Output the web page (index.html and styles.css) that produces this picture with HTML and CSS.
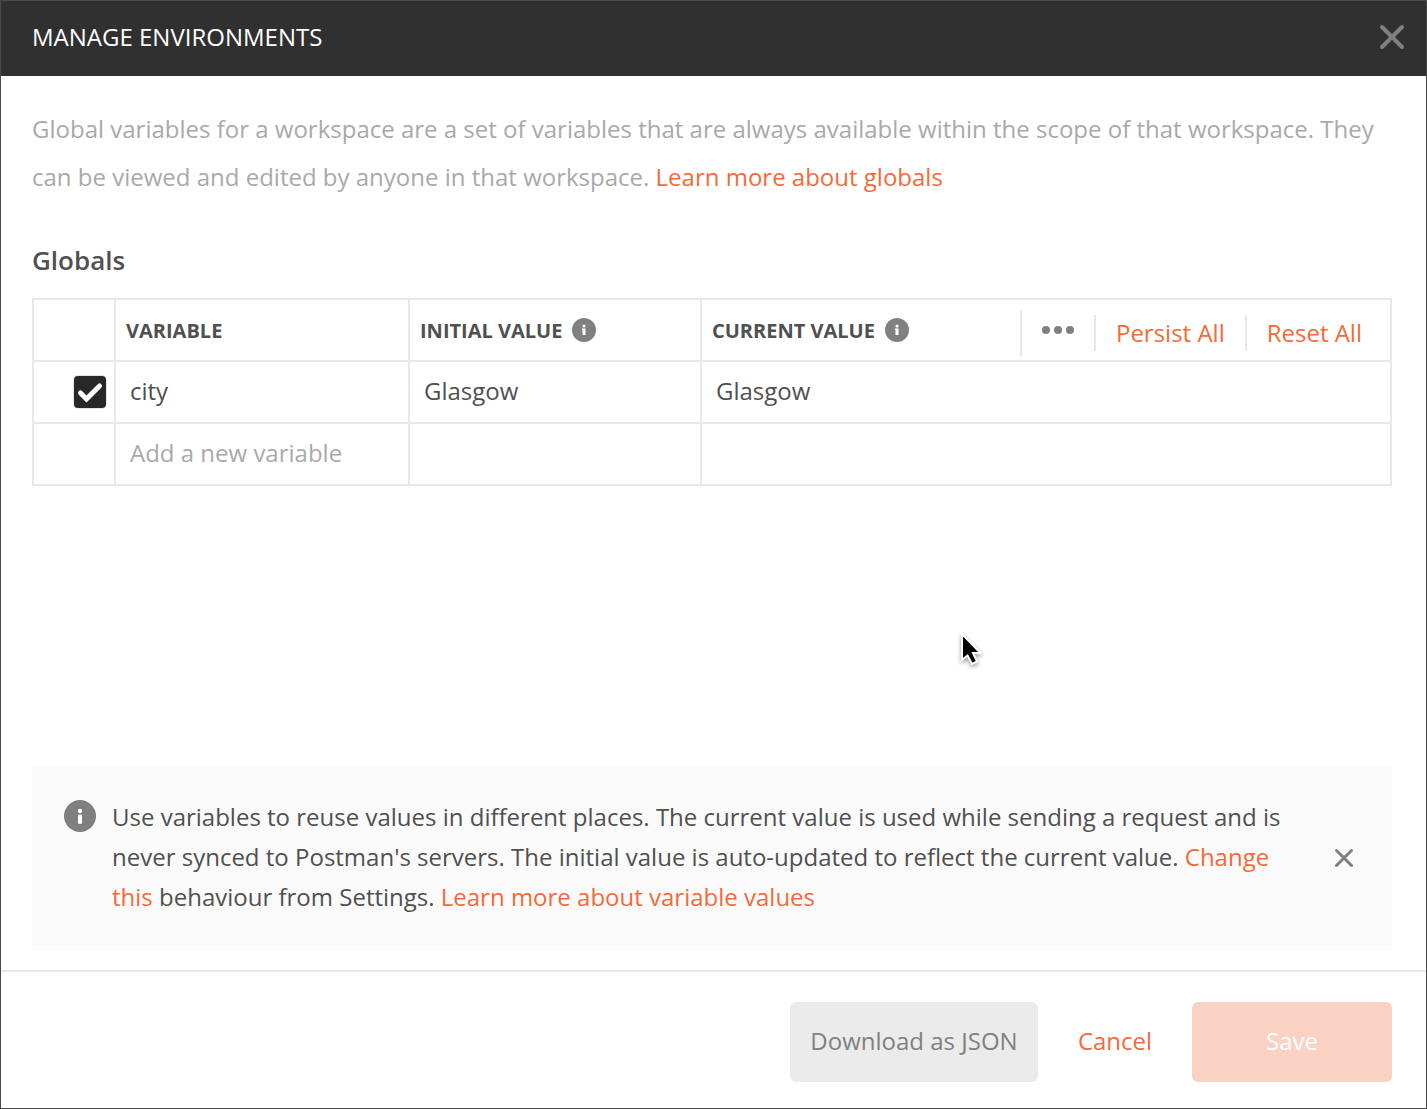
FILE: index.html
```html
<!DOCTYPE html>
<html lang="en">
<head>
<meta charset="utf-8">
<meta name="viewport" content="width=device-width, initial-scale=1">
<title>Manage Environments</title>
<link rel="stylesheet" href="styles.css">
</head>
<body>
<div class="modal" role="dialog" aria-labelledby="modal-title">
  <header class="modal-header">
    <h1 class="modal-title" id="modal-title">MANAGE ENVIRONMENTS</h1>
    <button class="icon-button close-modal" type="button" aria-label="Close">
      <svg width="26" height="26" viewBox="0 0 26 26"><path d="M3 3L23 23M23 3L3 23" stroke="#808080" stroke-width="4" stroke-linecap="round"/></svg>
    </button>
  </header>

  <main class="modal-body">
    <p class="intro">Global variables for a workspace are a set of variables that are always available within the scope of that workspace. They can be viewed and edited by anyone in that workspace. <a class="link" href="#globals">Learn more about globals</a></p>

    <h2 class="section-title" id="globals">Globals</h2>

    <table class="variables" aria-labelledby="globals">
      <colgroup>
        <col class="col-toggle"><col class="col-variable"><col class="col-initial"><col>
      </colgroup>
      <thead>
        <tr>
          <td></td>
          <th scope="col">VARIABLE</th>
          <th scope="col">
            <div class="heading">INITIAL VALUE
              <svg class="info" width="24" height="24" viewBox="0 0 24 24"><circle cx="12" cy="12" r="12" fill="#808080"/><circle cx="12" cy="8" r="1.6" fill="#fff"/><path d="M10 10.5h3.5v6.5h-3v-5H10z" fill="#fff"/></svg>
            </div>
          </th>
          <th scope="col">
            <div class="heading">CURRENT VALUE
              <svg class="info" width="24" height="24" viewBox="0 0 24 24"><circle cx="12" cy="12" r="12" fill="#808080"/><circle cx="12" cy="8" r="1.6" fill="#fff"/><path d="M10 10.5h3.5v6.5h-3v-5H10z" fill="#fff"/></svg>
              <div class="table-actions">
                <button class="icon-button more" type="button" aria-label="More options">
                  <svg width="32" height="8" viewBox="0 0 32 8" fill="#808080"><circle cx="4" cy="4" r="4"/><circle cx="16" cy="4" r="4"/><circle cx="28" cy="4" r="4"/></svg>
                </button>
                <button class="text-button persist" type="button">Persist All</button>
                <button class="text-button reset" type="button">Reset All</button>
              </div>
            </div>
          </th>
        </tr>
      </thead>
      <tbody>
        <tr>
          <td class="toggle-cell"><input class="toggle" type="checkbox" checked aria-label="Enable city"><svg class="tick" width="32" height="32" viewBox="0 0 32 32" fill="none"><path d="M6.500 17L12.500 23L25.500 10" stroke="#fff" stroke-width="5" stroke-linecap="round"/></svg></td>
          <td><input class="field" type="text" value="city" aria-label="Variable"></td>
          <td><input class="field" type="text" value="Glasgow" aria-label="Initial value"></td>
          <td><input class="field" type="text" value="Glasgow" aria-label="Current value"></td>
        </tr>
        <tr>
          <td></td>
          <td><input class="field" type="text" placeholder="Add a new variable" aria-label="New variable"></td>
          <td><input class="field" type="text" aria-label="New initial value"></td>
          <td><input class="field" type="text" aria-label="New current value"></td>
        </tr>
      </tbody>
    </table>

    <aside class="notice">
      <svg class="notice-icon" width="32" height="32" viewBox="0 0 32 32"><circle cx="16" cy="16" r="16" fill="#808080"/><circle cx="16" cy="11" r="2.200" fill="#fff"/><rect x="14" y="14.500" width="4" height="9.500" rx="1.500" fill="#fff"/></svg>
      <p class="notice-text">Use variables to reuse values in different places. The current value is used while sending a request and is never synced to Postman's servers. The initial value is auto-updated to reflect the current value. <a class="link" href="#settings">Change this</a> behaviour from Settings. <a class="link" href="#values">Learn more about variable values</a></p>
      <button class="icon-button dismiss" type="button" aria-label="Dismiss">
        <svg width="20" height="20" viewBox="0 0 20 20"><path d="M2.500 2.500L17.500 17.500M17.500 2.500L2.500 17.500" stroke="#808080" stroke-width="3" stroke-linecap="round"/></svg>
      </button>
    </aside>
  </main>

  <footer class="modal-footer">
    <button class="button secondary" type="button">Download as JSON</button>
    <button class="button plain" type="button">Cancel</button>
    <button class="button primary" type="button" disabled>Save</button>
  </footer>

  <svg class="pointer" width="32" height="40" viewBox="0 0 32 40"><path d="M6 4V30L11.500 25.500L16 34L21 31.500L17 23H24.500Z" fill="#000" stroke="#fff" stroke-width="2"/></svg>
</div>
</body>
</html>
```
FILE: styles.css
```css
* {
  box-sizing: border-box;
}

body {
  margin: 0;
  background: #fff;
  color: #505050;
  font: 24px/40px "Open Sans", "Noto Sans", sans-serif;
}

h1, h2, p {
  margin: 0;
}

button, input {
  font: inherit;
  color: inherit;
}

button {
  padding: 0;
  border: 0;
  background: none;
}

svg {
  display: block;
  flex: none;
}

.modal {
  position: relative;
  display: flex;
  flex-direction: column;
  min-height: 100vh;
  border: 1px solid #4a4a4a;
}

.modal-header {
  display: flex;
  align-items: center;
  justify-content: space-between;
  height: 75px;
  padding: 0 21px 4px 31px;
  background: #303030;
}

.modal-title {
  color: #fff;
  font-size: 24px;
  font-weight: 400;
}

.icon-button {
  display: flex;
  align-items: center;
  justify-content: center;
}

.modal-body {
  flex: 1;
  display: flex;
  flex-direction: column;
  padding: 29px 34px 20px 31px;
}

.intro {
  color: #a9a9a9;
  line-height: 48px;
}

.link {
  color: #f26b3a;
  text-decoration: none;
}

.section-title {
  margin: 39px 0 18px;
  font-size: 26px;
  font-weight: 600;
}

.variables {
  width: 100%;
  table-layout: fixed;
  border-collapse: collapse;
}

.col-toggle {
  width: 82px;
}

.col-variable {
  width: 294px;
}

.col-initial {
  width: 292px;
}

.variables th,
.variables td {
  height: 62px;
  padding: 0;
  border: 2px solid #e8e8e8;
}

.variables th {
  padding: 2px 0 0 10px;
  font-size: 20px;
  font-weight: 700;
  text-align: left;
}

.heading {
  display: flex;
  align-items: center;
  gap: 10px;
}

.info {
  margin-bottom: 2px;
}

.table-actions {
  display: flex;
  align-items: center;
  margin: 4px 0 0 auto;
  color: #f26b3a;
  font-size: 24px;
  font-weight: 400;
}

.more {
  width: 74px;
  height: 46px;
  border-left: 2px solid #e8e8e8;
  padding-bottom: 6px;
}

.text-button {
  height: 36px;
  padding: 0 20px;
  border-left: 2px solid #e8e8e8;
  line-height: 36px;
}

.reset {
  padding-right: 28px;
}

.toggle-cell {
  position: relative;
}

.toggle {
  appearance: none;
  display: block;
  width: 32px;
  height: 32px;
  margin: 0 8px 0 auto;
  border-radius: 4px;
  background: #282828;
  box-shadow: 0 0 0 1px #e4e4e4;
}

.tick {
  position: absolute;
  top: 14px;
  right: 8px;
  visibility: hidden;
  pointer-events: none;
}

.toggle:checked + .tick {
  visibility: visible;
}

.field {
  display: block;
  width: 100%;
  height: 60px;
  padding: 0 14px 4px;
  border: 0;
  background: transparent;
}

.field::placeholder {
  color: #a9a9a9;
  opacity: 1;
}

.notice {
  display: flex;
  align-items: flex-start;
  gap: 16px;
  margin-top: auto;
  padding: 31px 24px 33px 32px;
  background: #fafafa;
}

.notice-icon {
  margin-top: 3px;
}

.notice-text {
  flex: 1;
}

.dismiss {
  align-self: center;
  width: 48px;
  height: 48px;
  padding-top: 2px;
}

.modal-footer {
  display: flex;
  justify-content: flex-end;
  padding: 30px 34px 26px;
  border-top: 2px solid #e8e8e8;
}

.button {
  height: 80px;
  padding-bottom: 2px;
  border-radius: 6px;
}

.secondary {
  width: 248px;
  background: #ebebeb;
  color: #808080;
}

.plain {
  width: 154px;
  color: #f26b3a;
}

.primary {
  width: 200px;
  background: #fad2c4;
  color: #fff;
}

.pointer {
  position: absolute;
  top: 629px;
  left: 955px;
  filter: drop-shadow(0 2px 2px rgba(0, 0, 0, 0.4));
  pointer-events: none;
}
```
